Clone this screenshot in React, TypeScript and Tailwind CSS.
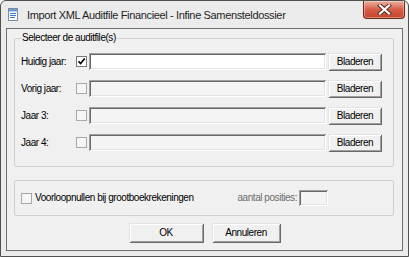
import React from "react";

const sunken =
  "shadow-[inset_1px_1px_#a0a0a0,inset_-1px_-1px_#ffffff,inset_2px_2px_#696969,inset_-2px_-2px_#e3e3e3]";
const raised =
  "shadow-[inset_1px_1px_#e3e3e3,inset_-1px_-1px_#696969,inset_2px_2px_#ffffff,inset_-2px_-2px_#a0a0a0]";
const txt = "text-[10px] tracking-[-0.45px] leading-[12px]";

function Check({ checked }: { checked?: boolean }) {
  return (
    <span
      className={`w-[11px] h-[11px] shrink-0 border flex items-center justify-center ${
        checked ? "border-[#7a7a7a] bg-white" : "border-[#a8a8a8] bg-[#f6f6f6]"
      }`}
    >
      {checked && (
        <svg width="9" height="9" viewBox="0 0 9 9">
          <path d="M1.5 4.2 L3.6 6.6 L7.8 1.5" fill="none" stroke="#000" strokeWidth="1.6" />
        </svg>
      )}
    </span>
  );
}

function Btn({ label, w, h }: { label: string; w: string; h: string }) {
  return (
    <div className={`${w} ${h} bg-[#f0f0f0] ${raised} flex items-center justify-center ${txt}`}>
      {label}
    </div>
  );
}

function Row({ label, checked }: { label: string; checked?: boolean }) {
  return (
    <div className="flex items-start h-[18px]">
      <span className={`w-[55px] h-[17px] flex items-center ${txt}`}>{label}</span>
      <div className="h-[17px] flex items-center">
        <Check checked={checked} />
      </div>
      <div
        className={`ml-[2px] w-[237px] h-[17px] ${sunken} ${checked ? "bg-white" : "bg-[#f4f4f4]"}`}
      />
      <div className="ml-[2px]">
        <Btn label="Bladeren" w="w-[54px]" h="h-[18px]" />
      </div>
    </div>
  );
}

function DocIcon() {
  return (
    <svg width="12" height="13" viewBox="0 0 12 13" className="shrink-0">
      <rect x="1.5" y="0.5" width="9" height="12" fill="#fdfdfd" stroke="#7d8da0" />
      <rect x="2" y="1" width="8" height="2.5" fill="#6b9bd6" />
      <line x1="3" y1="5.5" x2="9" y2="5.5" stroke="#3f78c4" />
      <line x1="3" y1="7.5" x2="9" y2="7.5" stroke="#3f78c4" />
      <line x1="3" y1="9.5" x2="8" y2="9.5" stroke="#3f78c4" />
    </svg>
  );
}

function CloseBtn() {
  return (
    <div className="ml-auto self-start mr-[3px] w-[42px] h-[18px] rounded-b-[4px] border border-t-0 border-[#6b2a1e] bg-linear-to-b from-[#eab0a2] via-[#d45e46] to-[#c8442c] flex items-center justify-center shadow-[inset_0_0_0_1px_rgba(255,255,255,0.35)]">
      <svg width="15" height="11" viewBox="0 0 15 11">
        <path d="M3 1.5 L12 9.5 M12 1.5 L3 9.5" stroke="#5b2a22" strokeWidth="4" strokeLinecap="square" />
        <path d="M3 1.5 L12 9.5 M12 1.5 L3 9.5" stroke="#ffffff" strokeWidth="2.2" strokeLinecap="square" />
      </svg>
    </div>
  );
}

export default function App() {
  return (
    <div className="w-[409px] h-[257px] flex flex-col bg-[#ebebeb] border border-[#505050] rounded-t-[6px] overflow-hidden font-['Liberation_Sans',Arial,sans-serif] text-black">
      <div className="h-[27px] shrink-0 flex items-center pl-[6px]">
        <DocIcon />
        <span className="ml-[8px] text-[11px] tracking-[-0.35px] leading-[14px] text-[#1e1e1e]">
          Import XML Auditfile Financieel - Infine Samensteldossier
        </span>
        <CloseBtn />
      </div>
      <div className="mx-[5px] mb-[5px] flex-1 border border-[#6e6e6e] bg-[#f0f0f0] flex flex-col">
        <fieldset className="mt-[3px] ml-[7px] mr-[8px] border border-[#d0d0d0] rounded-[2px] pt-[9px] pb-[14px] pl-[6px] pr-[10px]">
          <legend className={`px-[1px] ${txt}`}>Selecteer de auditfile(s)</legend>
          <div className="flex flex-col gap-[9px]">
            <Row label="Huidig jaar:" checked />
            <Row label="Vorig jaar:" />
            <Row label="Jaar 3:" />
            <Row label="Jaar 4:" />
          </div>
        </fieldset>
        <div className="mt-[13px] ml-[7px] mr-[8px] h-[36px] border border-[#d0d0d0] rounded-[2px] flex items-center pl-[6px] pr-[65px]">
          <Check />
          <span className={`ml-[3px] ${txt}`}>Voorloopnullen bij grootboekrekeningen</span>
          <span className={`ml-auto ${txt} text-[#6d6d6d]`}>aantal posities:</span>
          <div className={`ml-[2px] w-[29px] h-[16px] bg-[#f4f4f4] ${sunken}`} />
        </div>
        <div className="mt-[7px] flex justify-center gap-[8px]">
          <Btn label="OK" w="w-[75px]" h="h-[20px]" />
          <Btn label="Annuleren" w="w-[69px]" h="h-[20px]" />
        </div>
      </div>
    </div>
  );
}
